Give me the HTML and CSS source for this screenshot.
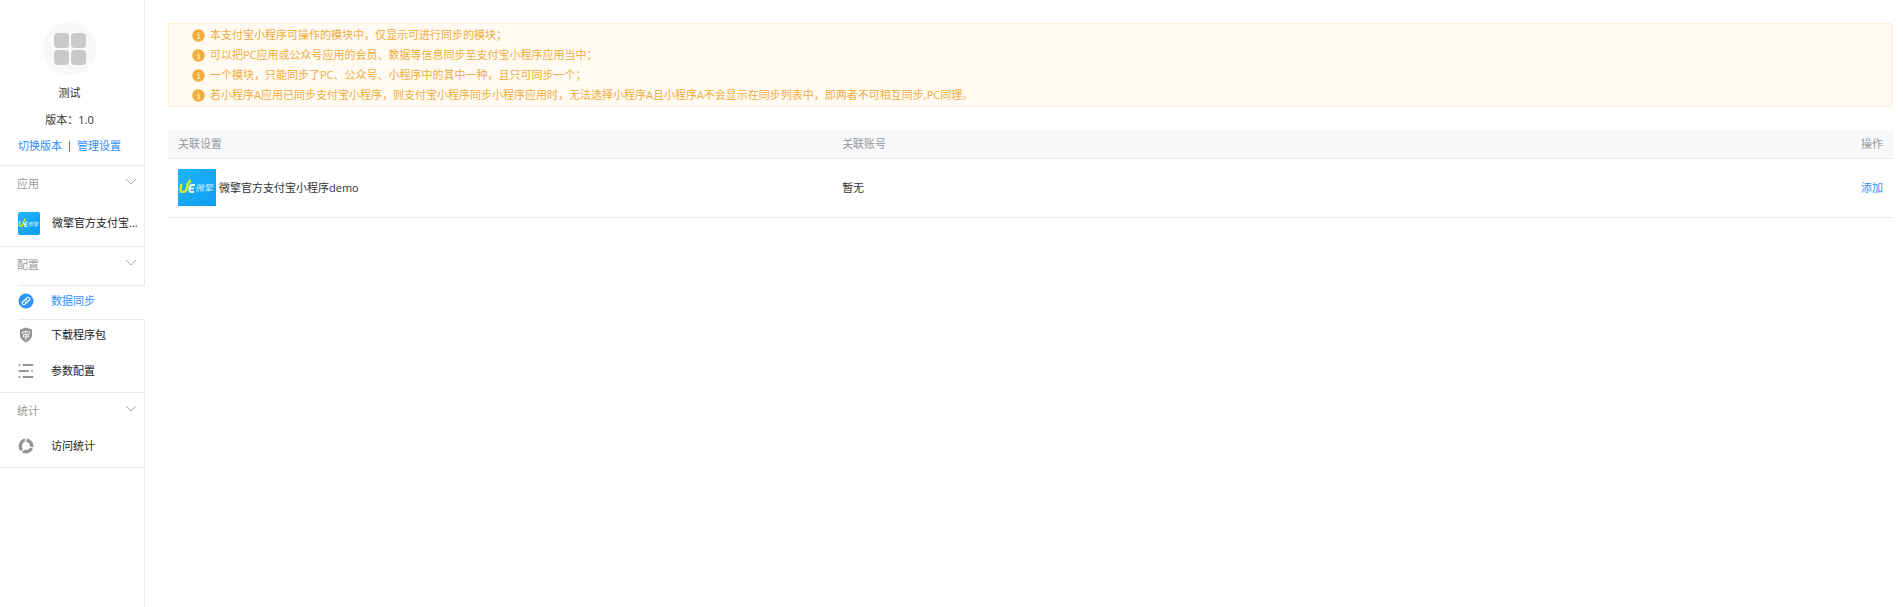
FILE: index.html
```html
<!DOCTYPE html>
<html lang="zh-CN">
<head>
<meta charset="utf-8">
<title>数据同步</title>
<link rel="stylesheet" href="styles.css">
</head>
<body>
<svg class="defs" aria-hidden="true">
  <defs>
    <linearGradient id="sky" x1="0" y1="0" x2="1" y2="1"><stop offset="0" stop-color="#1fb5ff"/><stop offset="1" stop-color="#109bee"/></linearGradient>
    <symbol id="logo" viewBox="0 0 38 38" preserveAspectRatio="none">
      <rect width="38" height="38" fill="url(#sky)"/>
      <path d="M3.500 15 2.500 20.500q-.3 3 2.400 3 3 0 4-3.500l1.100-5" fill="none" stroke="#d8f01c" stroke-width="2.400"/>
      <path d="M8 16 13 13" fill="none" stroke="#d8f01c" stroke-width="1.600"/>
      <circle cx="11.500" cy="12.300" r="1.400" fill="#d8f01c"/>
      <path d="M17 16.500h-3q-2 0-2.500 3.500t1.500 3.700h3M11.500 20h4.500" fill="none" stroke="#e4fff0" stroke-width="2"/>
      <text class="logo-text" x="17" y="23">微擎</text>
    </symbol>
    <symbol id="chevron" viewBox="0 0 12 8"><path d="M1 1l5 5 5-5" fill="none" stroke="#aaa" stroke-width="1"/></symbol>
    <symbol id="info" viewBox="0 0 13 13"><circle cx="6.500" cy="6.500" r="6.200" fill="#f0ad3c"/><path d="M5.300 5.500h1.500v4M5.300 9.500h3M6 3.500h1.200" fill="none" stroke="#fff5e0" stroke-width="1"/></symbol>
  </defs>
</svg>
<div class="layout">
  <aside class="sidebar">
    <div class="profile">
      <div class="avatar">
        <svg width="32" height="32" viewBox="0 0 32 32" fill="#c9c9c9"><rect width="15" height="15" rx="4"/><rect x="17" width="15" height="15" rx="4"/><rect y="17" width="15" height="15" rx="4"/><rect x="17" y="17" width="15" height="15" rx="4"/></svg>
      </div>
      <div class="profile-name">测试</div>
      <div class="profile-version">版本：1.0</div>
      <div class="profile-links"><a href="#">切换版本</a><span class="bar"></span><a href="#">管理设置</a></div>
    </div>
    <nav class="group">
      <button class="group-title" type="button">应用<svg width="12" height="8"><use href="#chevron"/></svg></button>
      <a class="item item-app" href="#"><svg class="app-logo" width="22" height="23"><use href="#logo"/></svg><span class="item-text">微擎官方支付宝...</span></a>
    </nav>
    <nav class="group">
      <button class="group-title" type="button">配置<svg width="12" height="8"><use href="#chevron"/></svg></button>
      <a class="item item-active" href="#">
        <svg width="16" height="16" viewBox="0 0 16 16"><circle cx="8" cy="8" r="7.500" fill="#2e94ff"/><g fill="none" stroke="#fff" stroke-width="1.200" stroke-linecap="round"><path d="M7.400 6.300 8.900 4.800a1.650 1.650 0 0 1 2.400 2.400L9.600 8.900a1.650 1.650 0 0 1-2.400 0"/><path d="M8.600 9.700 7.100 11.200a1.650 1.650 0 0 1-2.400-2.400L6.400 7.100a1.650 1.650 0 0 1 2.400 0"/></g></svg>
        <span class="item-text">数据同步</span></a>
      <a class="item" href="#">
        <svg width="16" height="16" viewBox="0 0 16 16"><path d="M8 .5 14 2.600v5.200c0 3.600-2.500 6-6 7.700-3.500-1.700-6-4.100-6-7.700V2.600z" fill="#959595"/><path d="M4.500 6.500v-1.500h7v1.500M8 3.500v1.500M8 6.500v6M5.500 7.500h5v2.500h-5z" fill="none" stroke="#fff" stroke-width=".9"/></svg>
        <span class="item-text">下载程序包</span></a>
      <a class="item" href="#">
        <svg width="16" height="16" viewBox="0 0 16 16" stroke="#959595" stroke-width="1.800" stroke-linecap="round"><path d="M1.500 2h.1M5.500 2h9M1.500 8h8.500M14 8h.1M1.500 14h.1M5.500 14h9"/></svg>
        <span class="item-text">参数配置</span></a>
    </nav>
    <nav class="group">
      <button class="group-title" type="button">统计<svg width="12" height="8"><use href="#chevron"/></svg></button>
      <a class="item" href="#">
        <svg width="16" height="16" viewBox="0 0 16 16"><circle cx="8" cy="8" r="5.700" fill="none" stroke="#959595" stroke-width="3.600"/><path d="M8.500 0 7 5M16 10.500 11 8.500M2.500 14.500 6 11" stroke="#fff" stroke-width="1.300"/></svg>
        <span class="item-text">访问统计</span></a>
    </nav>
  </aside>
  <main class="main">
    <ul class="notice">
      <li><svg width="13" height="13"><use href="#info"/></svg>本支付宝小程序可操作的模块中，仅显示可进行同步的模块；</li>
      <li><svg width="13" height="13"><use href="#info"/></svg>可以把PC应用或公众号应用的会员、数据等信息同步至支付宝小程序应用当中；</li>
      <li><svg width="13" height="13"><use href="#info"/></svg>一个模块，只能同步了PC、公众号、小程序中的其中一种，且只可同步一个；</li>
      <li><svg width="13" height="13"><use href="#info"/></svg>若小程序A应用已同步支付宝小程序，则支付宝小程序同步小程序应用时，无法选择小程序A且小程序A不会显示在同步列表中，即两者不可相互同步,PC同理。</li>
    </ul>
    <table class="table">
      <thead><tr><th class="col-setting">关联设置</th><th>关联账号</th><th class="col-action">操作</th></tr></thead>
      <tbody><tr>
        <td><div class="module"><svg width="38" height="37"><use href="#logo"/></svg><span>微擎官方支付宝小程序demo</span></div></td>
        <td>暂无</td>
        <td class="col-action"><a href="#">添加</a></td>
      </tr></tbody>
    </table>
  </main>
</div>
</body>
</html>
```
FILE: styles.css
```css
* { box-sizing: border-box; }
body {
  margin: 0;
  background: #fff;
  color: #333;
  font: 11px/20px "Open Sans", "Noto Sans CJK SC", sans-serif;
}
a { color: #2e8eff; text-decoration: none; }
svg { flex: none; }
.defs { position: absolute; width: 0; height: 0; }
.logo-text { font: italic 9px "Noto Sans CJK SC", sans-serif; fill: #c5ebff; }
.layout { display: flex; min-height: 100vh; }
.sidebar {
  display: flex;
  flex-direction: column;
  flex: none;
  width: 145px;
}
.sidebar::after { content: ""; flex: 1; border-right: 1px solid #e7e8eb; }
.profile {
  display: flex;
  flex-direction: column;
  align-items: center;
  padding: 22px 5px 9px 0;
  border-right: 1px solid #e7e8eb;
  border-bottom: 1px solid #e7e8eb;
}
.avatar {
  display: grid;
  place-items: center;
  width: 53px;
  height: 53px;
  margin-bottom: 8px;
  border-radius: 50%;
  background: #f6f8fa;
}
.profile-version { margin: 7px 0 6px; }
.profile-links { display: flex; align-items: center; gap: 7px; }
.bar { width: 1px; height: 11px; background: #2e8eff; }
.group { border-bottom: 1px solid #e7e8eb; }
.group-title {
  display: flex;
  align-items: center;
  justify-content: space-between;
  width: 100%;
  height: 38px;
  padding: 0 7px 3px 17px;
  border: 0;
  border-right: 1px solid #e7e8eb;
  background: none;
  color: #999;
  font: inherit;
}
.group-title svg { margin-bottom: 4px; }
.item {
  display: flex;
  align-items: center;
  gap: 17px;
  height: 36px;
  padding: 0 5px 6px 18px;
  border-right: 1px solid #e7e8eb;
  color: #222;
}
.item-text { white-space: nowrap; }
.item-app { height: 42px; gap: 12px; padding-bottom: 4px; }
.app-logo { border-radius: 2px; }
.item-active {
  height: 35px;
  margin-left: 18px;
  padding: 0 0 3px;
  border: solid #e7e8eb;
  border-width: 1px 0;
  color: #2e8eff;
}
.main { flex: 1; min-width: 0; padding: 23px 10px 0 23px; }
.notice {
  margin: 0 0 23px;
  padding: 1px 23px;
  list-style: none;
  border: 1px solid #ffeecc;
  border-radius: 3px;
  background: #fffaf2;
  color: #f0ad3c;
}
.notice li { display: flex; align-items: center; gap: 5px; }
.table { width: 100%; border-collapse: collapse; }
.table th, .table td {
  padding: 4px 10px;
  border-bottom: 1px solid #e7e8eb;
  text-align: left;
  font-weight: 400;
}
.table th { background: #f6f8fa; color: #999; }
.table td { padding: 10px 10px 11px; }
.table .col-setting { width: 38.5%; }
.table .col-action { text-align: right; }
.module { display: flex; align-items: center; gap: 3px; }
```
